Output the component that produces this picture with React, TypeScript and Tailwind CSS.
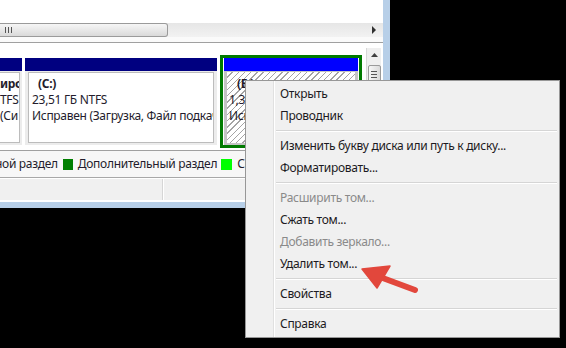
import React from 'react';

function MenuItem({ label, disabled }: { label: string; disabled?: boolean }) {
  return (
    <div className={`h-[22px] flex items-center pl-[5px] whitespace-nowrap ${disabled ? 'text-[#8a8a8a]' : 'text-[#1c1a22]'}`}>
      {label}
    </div>
  );
}

function Sep() {
  return (
    <div className="h-[8px] flex items-center pl-[1px] pr-[2px]">
      <div className="w-full h-[2px] border-t border-[#d5d5d5] border-b border-b-white" />
    </div>
  );
}

function ContextMenu() {
  return (
    <div className="absolute left-[245px] top-[80px] w-[315px] h-[258px] bg-[#f0f0f0] border border-[#979797] flex">
      <div className="w-[28px] border-r border-[#e0e0e0]" />
      <div className="w-px bg-white" />
      <div className="flex-1 pt-[2px]">
        <MenuItem label="Открыть" />
        <MenuItem label="Проводник" />
        <Sep />
        <MenuItem label="Изменить букву диска или путь к диску..." />
        <MenuItem label="Форматировать..." />
        <Sep />
        <MenuItem label="Расширить том..." disabled />
        <MenuItem label="Сжать том..." />
        <MenuItem label="Добавить зеркало..." disabled />
        <MenuItem label="Удалить том..." />
        <Sep />
        <MenuItem label="Свойства" />
        <Sep />
        <MenuItem label="Справка" />
      </div>
    </div>
  );
}

function HScroll() {
  return (
    <div className="h-[14px] shrink-0 flex bg-gradient-to-b from-[#e6e6e6] to-[#f2f2f2] pr-[2px]">
      <div className="w-[168px] h-full rounded-r-[3px] border border-l-0 border-[#9a9a9a] bg-gradient-to-b from-[#f6f6f6] to-[#d9d9d9] flex items-center pl-[5px] gap-[2px]">
        <div className="w-px h-[6px] bg-[#555]" />
        <div className="w-px h-[6px] bg-[#555]" />
        <div className="w-px h-[6px] bg-[#555]" />
      </div>
      <div className="flex-1" />
      <div className="w-[14px] flex items-center justify-center">
        <svg width="5" height="8" viewBox="0 0 5 8"><path d="M0 0 L4 4 L0 8 Z" fill="#303030" /></svg>
      </div>
    </div>
  );
}

function VScroll() {
  return (
    <div className="w-[15px] mt-[5px] ml-[4px] bg-[#efefef] border-l border-[#d8d8d8] flex flex-col items-center">
      <div className="h-[14px] flex items-center justify-center">
        <svg width="7" height="4" viewBox="0 0 7 4"><path d="M0 4 L3.5 0 L7 4 Z" fill="#404040" /></svg>
      </div>
      <div className="w-[13px] h-[40px] mt-[3px] rounded-[2px] border border-[#9a9a9a] bg-gradient-to-r from-[#f6f6f6] to-[#dadada] flex flex-col items-center pt-[5px] gap-[2px]">
        <div className="w-[6px] h-px bg-[#555]" />
        <div className="w-[6px] h-px bg-[#555]" />
        <div className="w-[6px] h-px bg-[#555]" />
      </div>
    </div>
  );
}

function Partitions() {
  return (
    <div className="flex-1 flex items-start overflow-hidden">
      {/* cut-off partition */}
      <div className="w-[22px] h-[87px] mt-[15px] flex flex-col">
        <div className="h-[13px] bg-[#000080]" />
        <div className="flex-1 bg-[#ececec] pr-[2px] pt-px pb-[2px]">
          <div className="h-full border border-l-0 border-[#bcbcbc] bg-white pt-[3px] leading-[16px] text-[#241c2c] overflow-hidden whitespace-nowrap">
            <div className="font-bold">ирс</div>
            <div>TFS</div>
            <div>(Си</div>
          </div>
        </div>
      </div>
      {/* C: */}
      <div className="w-[192px] h-[87px] mt-[15px] ml-[3px] flex flex-col">
        <div className="h-[13px] bg-[#000080]" />
        <div className="flex-1 bg-[#ececec] px-[3px] pt-px pb-[2px]">
          <div className="h-full border border-[#bcbcbc] bg-white pt-[3px] pl-[3px] leading-[16px] text-[#241c2c] overflow-hidden whitespace-nowrap">
            <div className="font-bold pl-[6px]">(C:)</div>
            <div>23,51 ГБ NTFS</div>
            <div>Исправен (Загрузка, Файл подкачки, Аварийный дамп памяти, Основной раздел)</div>
          </div>
        </div>
      </div>
      {/* selected */}
      <div className="w-[142px] h-[93px] mt-[12px] ml-[3px] border-[3px] border-[#007a00] bg-white px-px flex flex-col">
        <div className="h-[13px] bg-[#0000ff]" />
        <div className="flex-1 bg-[#c4c4c4] pt-px px-[3px] pb-[2px]">
          <div className="h-full bg-[repeating-linear-gradient(135deg,#ffffff_0px,#ffffff_3.4px,#a4a4a4_3.4px,#a4a4a4_4.4px)] pt-[4px] pl-[2px] leading-[16px] text-[#241c2c] whitespace-nowrap overflow-hidden">
            <div className="font-bold pl-[8px]">(E:)</div>
            <div>1,35 ГБ NTFS</div>
            <div>Исправен</div>
          </div>
        </div>
      </div>
    </div>
  );
}

export default function App() {
  return (
    <div className="relative w-[566px] h-[348px] overflow-hidden bg-black font-['Noto_Sans',sans-serif] text-[12px] tracking-[-0.3px] leading-none">
      <div className="w-[390px] h-[208px] bg-[#b7cfe8] pr-[7px] pb-[6px]">
        <div className="h-full bg-white flex flex-col">
          <div className="h-[23px] shrink-0 bg-white" />
          <HScroll />
          <div className="h-[5px] shrink-0 bg-[#fafafa]" />
          <div className="h-px shrink-0 bg-[#a0a0a0]" />
          <div className="h-[107px] shrink-0 flex pr-[2px] bg-white">
            <Partitions />
            <VScroll />
          </div>
          <div className="h-px shrink-0 bg-[#a0a0a0]" />
          <div className="h-[26px] shrink-0 bg-[#f7f7f7] flex items-center whitespace-nowrap text-[#241c2c] overflow-hidden">
            <span className="ml-[-5px]">ной раздел</span>
            <div className="w-[10px] h-[11px] ml-[5px] shrink-0 bg-[#007f00]" />
            <span className="ml-[5px]">Дополнительный раздел</span>
            <div className="w-[11px] h-[11px] ml-[4px] shrink-0 bg-[#00ff00]" />
            <span className="ml-[5px]">Свободно</span>
          </div>
          <div className="h-[2px] shrink-0 border-t border-[#a8a8a8] border-b border-b-white" />
          <div className="h-[21px] shrink-0 bg-[#f0f0f0] flex">
            <div className="w-[163px] border-r border-[#d6d6d6]" />
            <div className="w-px bg-white" />
          </div>
          <div className="h-[2px] shrink-0 bg-white" />
        </div>
      </div>
      <ContextMenu />
      <svg className="absolute left-0 top-0 pointer-events-none" width="566" height="348" viewBox="0 0 566 348">
        <line x1="380" y1="277" x2="415" y2="290" stroke="#e2473c" strokeWidth="6" strokeLinecap="round" />
        <polygon points="362,269 390,266 377,288" fill="#e2473c" stroke="#e2473c" strokeWidth="1.5" strokeLinejoin="round" />
      </svg>
    </div>
  );
}
